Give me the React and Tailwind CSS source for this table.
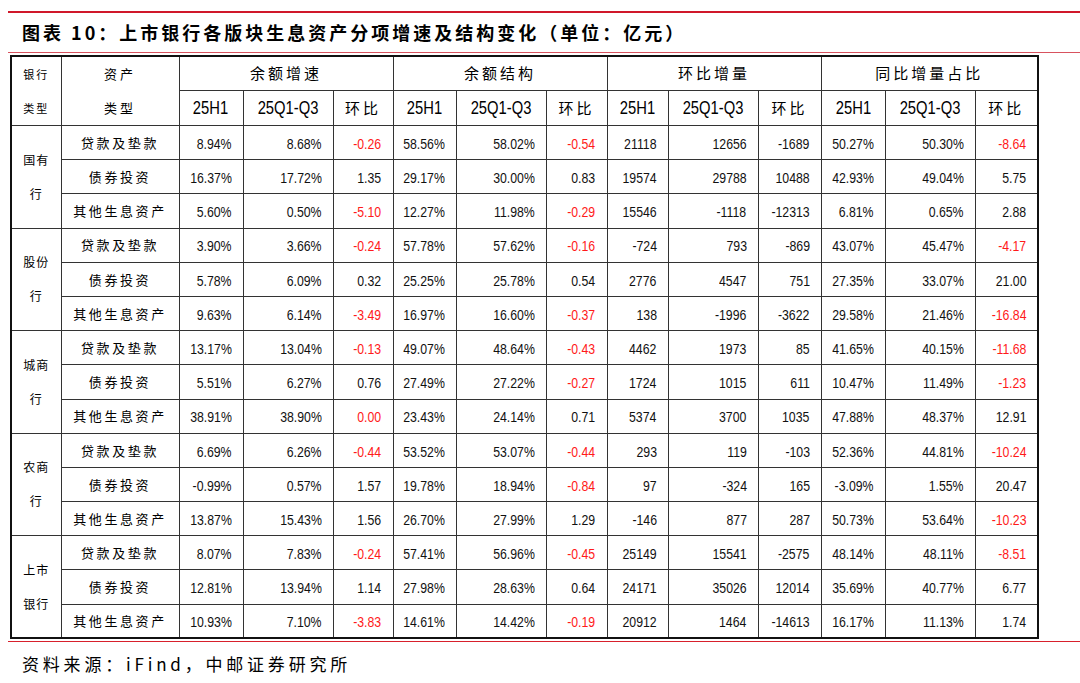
import React from 'react';

const COLS = [
  'w-[50px]', 'w-[118px]', 'w-[64px]', 'w-[90px]', 'w-[60px]', 'w-[63px]', 'w-[90px]',
  'w-[61px]', 'w-[61px]', 'w-[90px]', 'w-[63px]', 'w-[64px]', 'w-[90px]', 'w-[63px]',
];

const ASSETS = ['贷款及垫款', '债券投资', '其他生息资产'];

const GROUPS = [
  {
    name: ['国有', '行'],
    rows: [
      ['8.94%', '8.68%', '-0.26', '58.56%', '58.02%', '-0.54', '21118', '12656', '-1689', '50.27%', '50.30%', '-8.64'],
      ['16.37%', '17.72%', '1.35', '29.17%', '30.00%', '0.83', '19574', '29788', '10488', '42.93%', '49.04%', '5.75'],
      ['5.60%', '0.50%', '-5.10', '12.27%', '11.98%', '-0.29', '15546', '-1118', '-12313', '6.81%', '0.65%', '2.88'],
    ],
  },
  {
    name: ['股份', '行'],
    rows: [
      ['3.90%', '3.66%', '-0.24', '57.78%', '57.62%', '-0.16', '-724', '793', '-869', '43.07%', '45.47%', '-4.17'],
      ['5.78%', '6.09%', '0.32', '25.25%', '25.78%', '0.54', '2776', '4547', '751', '27.35%', '33.07%', '21.00'],
      ['9.63%', '6.14%', '-3.49', '16.97%', '16.60%', '-0.37', '138', '-1996', '-3622', '29.58%', '21.46%', '-16.84'],
    ],
  },
  {
    name: ['城商', '行'],
    rows: [
      ['13.17%', '13.04%', '-0.13', '49.07%', '48.64%', '-0.43', '4462', '1973', '85', '41.65%', '40.15%', '-11.68'],
      ['5.51%', '6.27%', '0.76', '27.49%', '27.22%', '-0.27', '1724', '1015', '611', '10.47%', '11.49%', '-1.23'],
      ['38.91%', '38.90%', '0.00', '23.43%', '24.14%', '0.71', '5374', '3700', '1035', '47.88%', '48.37%', '12.91'],
    ],
  },
  {
    name: ['农商', '行'],
    rows: [
      ['6.69%', '6.26%', '-0.44', '53.52%', '53.07%', '-0.44', '293', '119', '-103', '52.36%', '44.81%', '-10.24'],
      ['-0.99%', '0.57%', '1.57', '19.78%', '18.94%', '-0.84', '97', '-324', '165', '-3.09%', '1.55%', '20.47'],
      ['13.87%', '15.43%', '1.56', '26.70%', '27.99%', '1.29', '-146', '877', '287', '50.73%', '53.64%', '-10.23'],
    ],
  },
  {
    name: ['上市', '银行'],
    rows: [
      ['8.07%', '7.83%', '-0.24', '57.41%', '56.96%', '-0.45', '25149', '15541', '-2575', '48.14%', '48.11%', '-8.51'],
      ['12.81%', '13.94%', '1.14', '27.98%', '28.63%', '0.64', '24171', '35026', '12014', '35.69%', '40.77%', '6.77'],
      ['10.93%', '7.10%', '-3.83', '14.61%', '14.42%', '-0.19', '20912', '1464', '-14613', '16.17%', '11.13%', '1.74'],
    ],
  },
];

// 环比列（除环比增量外）非正数标红
const RED_COLS = [2, 5, 11];
const isRed = (i, v) => RED_COLS.includes(i) && parseFloat(v) <= 0;

const cell = 'border border-[#333] p-0';
const cn = "font-['Noto_Sans_CJK_SC','Noto_Sans',sans-serif]";
const num = "font-['Liberation_Sans',Arial,sans-serif]";

export default function App() {
  return (
    <div className={`w-[1080px] h-[683px] bg-white overflow-hidden text-black ${cn}`}>
      <div className="pt-[11px] pl-[8px]">
        <div className="h-[2px] bg-[#d0182a]" />
      </div>
      <div className="h-[39px] pl-[22px] flex items-center text-[18px] font-bold tracking-[3px]">
        图表 10：上市银行各版块生息资产分项增速及结构变化（单位：亿元）
      </div>
      <div className="pl-[8px]">
        <div className="h-px bg-[#d8525e]" />
      </div>

      <div className="pl-[10px] pt-[2px]">
        <table className="table-fixed border-collapse border-2 border-[#111] w-[1027px]">
          <colgroup>
            {COLS.map((w, i) => (
              <col key={i} className={w} />
            ))}
          </colgroup>
          <thead>
            <tr className="h-[34px]">
              <th rowSpan={2} className={`${cell} font-normal text-[11px] tracking-[2px] leading-[34px] text-center`}>
                银行<br />类型
              </th>
              <th rowSpan={2} className={`${cell} font-normal text-[13px] tracking-[3px] leading-[34px] text-center`}>
                资产<br />类型
              </th>
              {['余额增速', '余额结构', '环比增量', '同比增量占比'].map((t) => (
                <th key={t} colSpan={3} className={`${cell} font-normal text-[15px] tracking-[3px] text-center`}>
                  {t}
                </th>
              ))}
            </tr>
            <tr className="h-[34px]">
              {[0, 1, 2, 3].map((g) => (
                <React.Fragment key={g}>
                  <th className={`${cell} font-normal text-center`}>
                    <span className={`inline-block text-[18px] scale-x-[0.82] ${num}`}>25H1</span>
                  </th>
                  <th className={`${cell} font-normal text-center`}>
                    <span className={`inline-block text-[18px] scale-x-[0.82] ${num}`}>25Q1-Q3</span>
                  </th>
                  <th className={`${cell} font-normal text-[15px] tracking-[3px] text-center`}>环比</th>
                </React.Fragment>
              ))}
            </tr>
          </thead>
          <tbody>
            {GROUPS.map((g) =>
              g.rows.map((r, ri) => (
                <tr key={g.name.join('') + ri} className="h-[34.2px]">
                  {ri === 0 && (
                    <td rowSpan={3} className={`${cell} text-center text-[12px] tracking-[1px] leading-[34px]`}>
                      {g.name[0]}
                      <br />
                      {g.name[1]}
                    </td>
                  )}
                  <td className={`${cell} text-center text-[13px] tracking-[2.6px]`}>{ASSETS[ri]}</td>
                  {r.map((v, i) => (
                    <td
                      key={i}
                      className={`${cell} text-right pr-[11px] ${isRed(i, v) ? 'text-[#ff1a1a]' : 'text-[#111]'}`}
                    >
                      <span className={`inline-block origin-right scale-x-[0.82] text-[15px] ${num}`}>{v}</span>
                    </td>
                  ))}
                </tr>
              ))
            )}
          </tbody>
        </table>
      </div>

      <div className="pl-[8px] pt-[2px]">
        <div className="h-px bg-[#d8202c]" />
      </div>
      <div className="pl-[22px] pt-[9px] text-[17px] tracking-[3.8px]">
        资料来源：iFind，中邮证券研究所
      </div>
    </div>
  );
}
